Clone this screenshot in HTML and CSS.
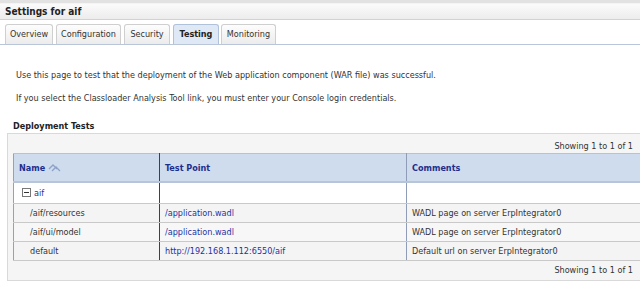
FILE: index.html
```html
<!DOCTYPE html>
<html>
<head>
<meta charset="utf-8">
<link rel="stylesheet" href="styles.css">
</head>
<body>
<div class="topband"></div>
<div class="titlebar">Settings for aif</div>
<div class="tabs">
  <div class="tab t-ov">Overview</div>
  <div class="tab t-cf">Configuration</div>
  <div class="tab t-se">Security</div>
  <div class="tab t-te active">Testing</div>
  <div class="tab t-mo">Monitoring</div>
</div>
<div class="intro">
  <p>Use this page to test that the deployment of the Web application component (WAR file) was successful.</p>
  <p>If you select the Classloader Analysis Tool link, you must enter your Console login credentials.</p>
</div>
<div class="section-title">Deployment Tests</div>
<div class="box">
  <div class="pager">Showing 1 to 1 of 1</div>
  <table class="grid">
    <colgroup><col class="c1"><col class="c2"><col class="c3"></colgroup>
    <thead>
      <tr><th class="name">Name <svg class="sort" width="14" height="9" viewBox="0 0 14 9"><path d="M1 6 L5 2 L9 6" fill="none" stroke="#8ea2c8" stroke-width="1.3"/><path d="M4 8 L8 4 L12 8" fill="none" stroke="#8ea2c8" stroke-width="1.3"/></svg></th><th class="tp">Test Point</th><th class="cm">Comments</th></tr>
    </thead>
    <tbody>
      <tr class="grp"><td><span class="tog"><svg width="9" height="9" viewBox="0 0 9 9"><rect x="0.5" y="0.5" width="8" height="8" fill="#fff" stroke="#777"/><path d="M2 4.5 H7" stroke="#333"/></svg></span><a>aif</a></td><td class="tp"></td><td></td></tr>
      <tr class="alt"><td class="ind">/aif/resources</td><td class="tp"><a>/application.wadl</a></td><td>WADL page on server ErpIntegrator0</td></tr>
      <tr><td class="ind">/aif/ui/model</td><td class="tp"><a>/application.wadl</a></td><td>WADL page on server ErpIntegrator0</td></tr>
      <tr class="alt"><td class="ind">default</td><td class="tp"><a>http://192.168.1.112:6550/aif</a></td><td>Default url on server ErpIntegrator0</td></tr>
    </tbody>
  </table>
  <div class="pager bottom">Showing 1 to 1 of 1</div>
</div>
</body>
</html>
```
FILE: styles.css
```css
html, body {
  margin: 0;
  padding: 0;
  overflow: hidden;
  background: #fff;
}
body {
  font-family: "DejaVu Sans Condensed", "DejaVu Sans", sans-serif;
  font-size: 9px;
  color: #333;
  width: 640px;
  height: 282px;
}
.topband {
  height: 3px;
  background: #e2e2e2;
}
.titlebar {
  height: 15px;
  line-height: 15px;
  padding-left: 5px;
  font-weight: bold;
  font-size: 10px;
  color: #222;
  background: linear-gradient(#fbfbfb, #ececec);
  border-top: 1px solid #f4f4f4;
  border-bottom: 1px solid #d2d2d2;
}
.tabs {
  display: flex;
  gap: 3px;
  margin-top: 4px;
  padding-left: 5px;
  border-bottom: 1px solid #b9c6da;
}
.tab {
  box-sizing: border-box;
  height: 20px;
  line-height: 19px;
  text-align: center;
  border: 1px solid #cfcfcf;
  border-bottom: none;
  border-radius: 3px 3px 0 0;
  background: linear-gradient(#fdfdfd, #ececec);
  color: #333;
}
.t-ov { width: 48px; }
.t-cf { width: 65px; }
.t-se { width: 46px; }
.t-te { width: 46px; }
.t-mo { width: 55px; margin-left: -1px; }
.tab.active {
  background: #dfe8f5;
  border-color: #b0c2da;
  font-weight: bold;
  color: #222;
}
.intro {
  padding-left: 16px;
  padding-top: 24px;
}
.intro p {
  margin: 0;
  height: 23px;
  line-height: 12px;
}
.section-title {
  margin-top: 5px;
  padding-left: 13px;
  font-weight: bold;
  color: #222;
  height: 12px;
  line-height: 12px;
}
.box {
  margin-top: 1px;
  margin-left: 7px;
  width: 660px;
  background: #f5f5f5;
  border: 1px solid #d9d9d9;
}
.pager {
  width: 625px;
  text-align: right;
  height: 19px;
  line-height: 25px;
}
.pager.bottom {
  line-height: 18px;
  height: 19px;
}
.grid {
  margin-left: 5px;
  width: 660px;
  border-collapse: collapse;
  table-layout: fixed;
  background: #fff;
}
.c1 { width: 146px; }
.c2 { width: 247px; }
.grid th {
  height: 27px;
  text-align: left;
  padding: 0 0 0 5px;
  font-weight: bold;
  color: #1d2f8c;
  background: #cfdcee;
  border-top: 1px solid #b5c3d8;
  border-bottom: 2px solid #b7c5d9;
}
.grid th.name {
  border-left: 1px solid #90a2c0;
  border-right: 1px solid #2a3c9a;
}
.grid th.tp {
  border-right: 1px solid #8e9cb8;
}
.sort {
  vertical-align: -1px;
}
.grid td {
  height: 18px;
  padding: 0 0 0 5px;
  border-bottom: 1px solid #c9c9c9;
  white-space: nowrap;
  color: #333;
}
.grid td:first-child {
  border-left: 1px solid #90a2c0;
  border-right: 1px solid #2a3c9a;
}
.grid td.tp {
  border-right: 1px solid #8e9cb8;
}
.grid tr td {
  background: #f7f7f7;
}
.grid tr.alt td {
  background: #f4f4f4;
}
.grid tr.grp td {
  height: 20px;
  background: #fff;
}
.grid tr.grp td:first-child {
  padding-left: 8px;
}
.grid a {
  color: #2233a6;
}
.tog {
  display: inline-block;
  width: 9px;
  height: 9px;
  margin-right: 3px;
  vertical-align: -1px;
}
.tog svg { display: block; }
.grid td.ind {
  padding-left: 16px;
}
```
